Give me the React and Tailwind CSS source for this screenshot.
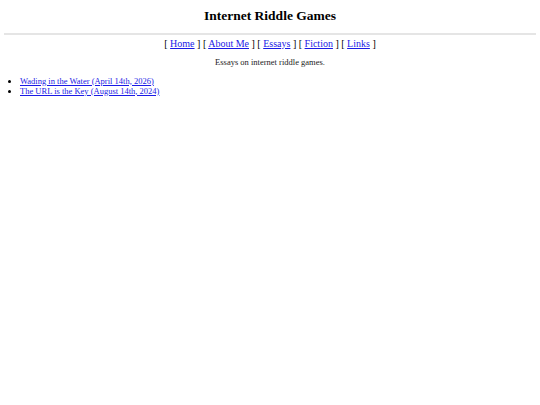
export default function App() {
  const serif = { fontFamily: '"Liberation Serif", "Times New Roman", serif' }
  const link = 'text-[#1a1ae6] underline'
  return (
    <div className="min-h-screen bg-white text-black px-[4px] pt-[8px]" style={serif}>
      <h1 className="text-center font-bold text-[13.5px] leading-[16px]">Internet Riddle Games</h1>
      <hr className="mt-[9px] border-0 border-t-[2px] border-[#e5e5e5]" />
      <nav className="mt-[2px] text-center text-[10px] leading-[14px]">
        [ <a href="#" className={link}>Home</a> ] [ <a href="#" className={link}>About Me</a> ] [ <a href="#" className={link}>Essays</a> ] [ <a href="#" className={link}>Fiction</a> ] [ <a href="#" className={link}>Links</a> ]
      </nav>
      <p className="mt-[6px] text-center text-[8.5px] leading-[11px] text-[#222]">Essays on internet riddle games.</p>
      <ul className="mt-[7.5px] pl-[16px] list-disc text-[8.5px] leading-[10px]">
        <li><a href="#" className={link}>Wading in the Water (April 14th, 2026)</a></li>
        <li><a href="#" className={link}>The URL is the Key (August 14th, 2024)</a></li>
      </ul>
    </div>
  )
}
